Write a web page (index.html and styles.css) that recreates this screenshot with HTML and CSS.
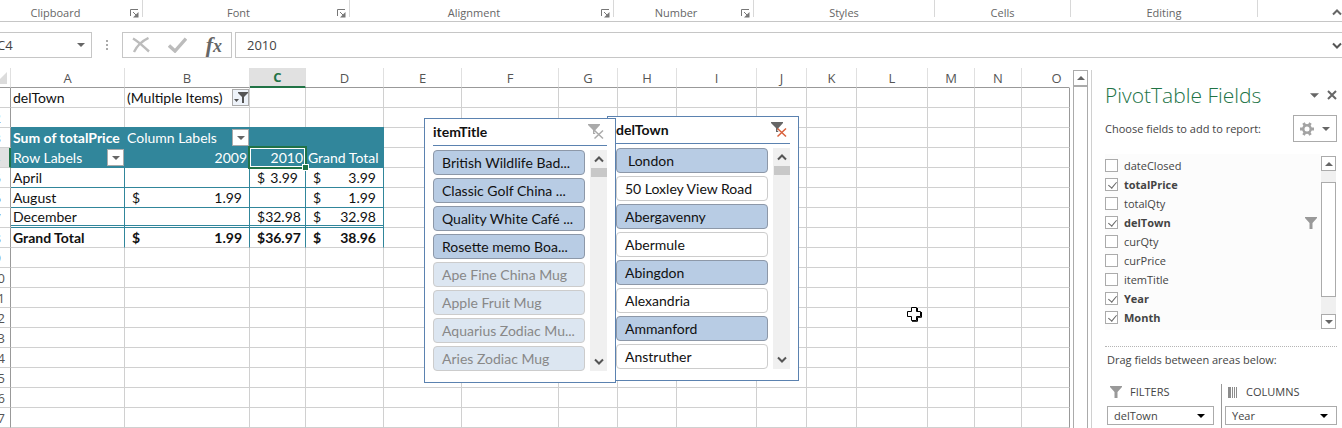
FILE: index.html
```html
<!DOCTYPE html>
<html lang="en">
<head>
<meta charset="utf-8">
<title>PivotTable workbook</title>
<link rel="stylesheet" href="styles.css">
</head>
<body>
<svg class="defs" aria-hidden="true">
  <symbol id="launch" viewBox="0 0 9 9"><path d="M.5 7V.5H8M3 3l3 3" fill="none" stroke="#777"/><path d="M8.500 3v5.500H3z" fill="#777"/></symbol>
  <symbol id="down" viewBox="0 0 8 4"><path d="M0 0h8L4 4z" fill="currentColor"/></symbol>
  <symbol id="up" viewBox="0 0 8 4"><path d="M0 4h8L4 0z" fill="currentColor"/></symbol>
  <symbol id="funnel" viewBox="0 0 12 12"><path d="M0 0h12v1L7.500 6v6h-3V6L0 1z" fill="currentColor"/></symbol>
  <symbol id="chev-up" viewBox="0 0 10 7"><path d="M1 5.500L5 1.500l4 4" fill="none" stroke="currentColor" stroke-width="2"/></symbol>
  <symbol id="chev-down" viewBox="0 0 10 7"><path d="M1 1.500l4 4 4-4" fill="none" stroke="currentColor" stroke-width="2"/></symbol>
  <symbol id="clear" viewBox="0 0 16 16"><path d="M0 0h12v1L7.500 6v4H5V6L0 1z" fill="currentColor" stroke="none"/><path d="M7 7l8 7M15 7l-8 7" fill="none" stroke="#fff" stroke-width="3"/><path d="M6.500 6.500l8.500 8M15 6.500l-8.500 8" fill="none" stroke-width="1.500"/></symbol>
</svg>

<header class="ribbon">
  <div class="group group-clip"><span>Clipboard</span><button class="launcher" aria-label="Clipboard settings"><svg><use href="#launch"/></svg></button></div>
  <div class="group group-font"><span>Font</span><button class="launcher" aria-label="Font settings"><svg><use href="#launch"/></svg></button></div>
  <div class="group group-align"><span>Alignment</span><button class="launcher" aria-label="Alignment settings"><svg><use href="#launch"/></svg></button></div>
  <div class="group group-number"><span>Number</span><button class="launcher" aria-label="Number settings"><svg><use href="#launch"/></svg></button></div>
  <div class="group group-styles"><span>Styles</span></div>
  <div class="group group-cells"><span>Cells</span></div>
  <div class="group group-edit"><span>Editing</span></div>
  <button class="collapse" aria-label="Collapse ribbon"><svg viewBox="0 0 10 7"><use href="#chev-up"/></svg></button>
</header>

<div class="formula-bar">
  <div class="name-box"><input aria-label="Name box" value="C4"><button aria-label="Names"><svg class="arrow"><use href="#down"/></svg></button></div>
  <div class="dots"><i></i><i></i><i></i></div>
  <div class="tools">
    <button aria-label="Cancel"><svg width="18" height="16" viewBox="0 0 18 16"><path d="M1 1.500C7 5 12 10 17 14.500M16.500 1C10 4 5 9 2 15" fill="none" stroke="#bcbcbc" stroke-width="2.400"/></svg></button>
    <button aria-label="Enter"><svg width="19" height="16" viewBox="0 0 19 16"><path d="M1 8.500l6 5.500L18 1.500" fill="none" stroke="#bcbcbc" stroke-width="3.400"/></svg></button>
    <button class="fx" aria-label="Insert function"><b>f</b><b class="fx-x">x</b></button>
  </div>
  <div class="formula"><input aria-label="Formula" value="2010"><button aria-label="Expand formula bar"><svg class="chev"><use href="#chev-down"/></svg></button></div>
</div>

<main class="work">
  <section class="sheet">
    <table class="grid">
      <colgroup><col class="c-head"><col class="c-a"><col class="c-b"><col class="c-c"><col class="c-d"><col class="c-e"><col class="c-f"><col class="c-g"><col class="c-h"><col class="c-i"><col class="c-j"><col class="c-k"><col class="c-l"><col class="c-m"><col class="c-n"><col></colgroup>
      <thead>
        <tr><th class="corner"><svg width="7" height="12" viewBox="0 0 7 12"><path d="M7 0v12H0V7z" fill="#dcdcdc"/></svg></th><th>A</th><th>B</th><th class="active">C</th><th>D</th><th>E</th><th>F</th><th>G</th><th>H</th><th>I</th><th>J</th><th>K</th><th>L</th><th>M</th><th>N</th><th class="col-o">O</th></tr>
      </thead>
      <tbody>
        <tr><th><span>1</span></th><td>delTown</td><td><div class="with-btn"><span>(Multiple Items)</span><button class="drop filtered" aria-label="Filter delTown"><svg width="14" height="12" viewBox="0 0 14 12"><path d="M4 0h10v1l-4 4v6H8V5L4 1zM0 7h5L2.500 10z" fill="#555"/></svg></button></div></td><td><td><td><td><td><td><td><td><td><td><td><td><td></tr>
        <tr><th><span>2</span></th><td><td><td><td><td><td><td><td><td><td><td><td><td><td><td></tr>
        <tr class="pivot-head"><th><span>3</span></th><td><b>Sum of totalPrice</b></td><td><div class="with-btn"><span>Column Labels</span><button class="drop" aria-label="Column labels menu"><svg class="arrow"><use href="#down"/></svg></button></div></td><td><td><td><td><td><td><td><td><td><td><td><td><td></tr>
        <tr class="pivot-head"><th class="active-row"><span>4</span></th><td><div class="with-btn"><span>Row Labels</span><button class="drop" aria-label="Row labels menu"><svg class="arrow"><use href="#down"/></svg></button></div></td><td class="num">2009</td><td class="num selected">2010</td><td>Grand Total</td><td><td><td><td><td><td><td><td><td><td><td></tr>
        <tr class="pivot"><th><span>5</span></th><td>April</td><td></td><td><div class="money"><span>$</span><span>3.99</span></div></td><td><div class="money"><span>$</span><span>3.99</span></div></td><td><td><td><td><td><td><td><td><td><td><td></tr>
        <tr class="pivot"><th><span>6</span></th><td>August</td><td><div class="money"><span>$</span><span>1.99</span></div></td><td></td><td><div class="money"><span>$</span><span>1.99</span></div></td><td><td><td><td><td><td><td><td><td><td><td></tr>
        <tr class="pivot pivot-last"><th><span>7</span></th><td>December</td><td></td><td><div class="money"><span>$</span><span>32.98</span></div></td><td><div class="money"><span>$</span><span>32.98</span></div></td><td><td><td><td><td><td><td><td><td><td><td></tr>
        <tr class="pivot pivot-total"><th><span>8</span></th><td>Grand Total</td><td><div class="money"><span>$</span><span>1.99</span></div></td><td><div class="money"><span>$</span><span>36.97</span></div></td><td><div class="money"><span>$</span><span>38.96</span></div></td><td><td><td><td><td><td><td><td><td><td><td></tr>
        <tr><th><span>9</span></th><td><td><td><td><td><td><td><td><td><td><td><td><td><td><td></tr>
        <tr class="wide"><th><span>10</span></th><td><td><td><td><td><td><td><td><td><td><td><td><td><td><td></tr>
        <tr class="wide"><th><span>11</span></th><td><td><td><td><td><td><td><td><td><td><td><td><td><td><td></tr>
        <tr class="wide"><th><span>12</span></th><td><td><td><td><td><td><td><td><td><td><td><td><td><td><td></tr>
        <tr class="wide"><th><span>13</span></th><td><td><td><td><td><td><td><td><td><td><td><td><td><td><td></tr>
        <tr class="wide"><th><span>14</span></th><td><td><td><td><td><td><td><td><td><td><td><td><td><td><td></tr>
        <tr class="wide"><th><span>15</span></th><td><td><td><td><td><td><td><td><td><td><td><td><td><td><td></tr>
        <tr class="wide"><th><span>16</span></th><td><td><td><td><td><td><td><td><td><td><td><td><td><td><td></tr>
        <tr class="wide"><th><span>17</span></th><td><td><td><td><td><td><td><td><td><td><td><td><td><td><td></tr>
      </tbody>
    </table>

    <section class="slicer slicer-town">
      <header><h2>delTown</h2><button class="clear on" aria-label="Clear delTown filter"><svg><use href="#clear"/></svg></button></header>
      <div class="slicer-body">
        <div class="items">
          <button class="on lead">London</button><button>50 Loxley View Road</button><button class="on">Abergavenny</button><button>Abermule</button><button class="on">Abingdon</button><button>Alexandria</button><button class="on">Ammanford</button><button>Anstruther</button>
        </div>
        <div class="track"><svg class="chev"><use href="#chev-up"/></svg><i></i><svg class="chev end"><use href="#chev-down"/></svg></div>
      </div>
    </section>
    <section class="slicer slicer-item">
      <header><h2>itemTitle</h2><button class="clear" aria-label="Clear itemTitle filter"><svg><use href="#clear"/></svg></button></header>
      <div class="slicer-body">
        <div class="items">
          <button class="on">British Wildlife Bad...</button><button class="on">Classic Golf China ...</button><button class="on">Quality White Café ...</button><button class="on">Rosette memo Boa...</button><button class="dim">Ape Fine China Mug</button><button class="dim">Apple Fruit Mug</button><button class="dim">Aquarius Zodiac Mu...</button><button class="dim">Aries Zodiac Mug</button>
        </div>
        <div class="track"><svg class="chev"><use href="#chev-up"/></svg><i></i><svg class="chev end"><use href="#chev-down"/></svg></div>
      </div>
    </section>
    <svg class="cursor" viewBox="0 0 16 16"><path d="M5.500 1.500h5v4h4v5h-4v4h-5v-4h-4v-5h4z" fill="#fff" stroke="#000"/><path d="M11.500 5v-3M6 15.300h5.500v-4h4V6" fill="none" stroke="#000"/></svg>
  </section>

  <div class="vscroll"><button aria-label="Scroll up"><svg class="arrow"><use href="#up"/></svg></button><div class="thumb"></div></div>

  <aside class="pane">
    <div class="pane-title"><h1>PivotTable Fields</h1><button aria-label="Pane options"><svg class="arrow wide-arrow"><use href="#down"/></svg></button><button aria-label="Close pane"><svg width="10" height="10" viewBox="0 0 10 10"><path d="M1 1l8 8M9 1L1 9" stroke="#666" stroke-width="2"/></svg></button></div>
    <div class="choose"><p>Choose fields to add to report:</p><button class="gear" aria-label="Tools"><svg width="14" height="14" viewBox="0 0 14 14"><circle cx="7" cy="7" r="3.700" fill="none" stroke="#a3a3a3" stroke-width="2.400"/><path d="M3.500 1l1.500 2.500M10.500 1L9 3.500M0 7h3M11 7h3M3.500 13L5 10.500M10.500 13L9 10.500" stroke="#a3a3a3" stroke-width="2.800"/></svg><svg class="arrow"><use href="#down"/></svg></button></div>
    <div class="fields">
      <div class="field-list">
        <label><input type="checkbox"><span>dateClosed</span></label>
        <label><input type="checkbox" checked><span>totalPrice</span></label>
        <label><input type="checkbox"><span>totalQty</span></label>
        <label><input type="checkbox" checked><span>delTown</span><svg class="funnel"><use href="#funnel"/></svg></label>
        <label><input type="checkbox"><span>curQty</span></label>
        <label><input type="checkbox"><span>curPrice</span></label>
        <label><input type="checkbox"><span>itemTitle</span></label>
        <label><input type="checkbox" checked><span>Year</span></label>
        <label><input type="checkbox" checked><span>Month</span></label>
      </div>
      <div class="list-scroll"><button aria-label="Scroll fields up"><svg class="arrow"><use href="#up"/></svg></button><div class="thumb"></div><button aria-label="Scroll fields down"><svg class="arrow"><use href="#down"/></svg></button></div>
    </div>
    <div class="areas">
      <p>Drag fields between areas below:</p>
      <div class="area-row">
        <div class="area"><h3><svg class="funnel"><use href="#funnel"/></svg>FILTERS</h3><button>delTown<svg class="arrow"><use href="#down"/></svg></button></div>
        <div class="area"><h3><svg width="10" height="11" viewBox="0 0 10 11"><path d="M0 0h3v11H0zM4 0h1v11H4zM6 0h1v11H6zM8 0h1v11H8z" fill="#8c8c8c"/></svg>COLUMNS</h3><button>Year<svg class="arrow"><use href="#down"/></svg></button></div>
      </div>
    </div>
  </aside>
</main>
</body>
</html>
```
FILE: styles.css
```css
* { box-sizing: border-box; }
body { margin: 0; min-height: 100vh; display: flex; flex-direction: column; background: #fff; color: #444; font: 12px/16px "Open Sans", sans-serif; overflow: hidden; }
button, input { font: inherit; color: inherit; margin: 0; padding: 0; border: 0; background: none; outline: 0; }
button { display: flex; align-items: center; justify-content: center; }
h1, h2, h3, p { margin: 0; font-weight: normal; }
svg { display: block; flex: none; }
.defs { position: absolute; width: 0; height: 0; }
.arrow { width: 8px; height: 4px; color: #666; }
.chev { width: 10px; height: 7px; color: #555; }
.funnel { width: 12px; height: 12px; color: #999; }

/* Ribbon labels */
.ribbon { display: flex; height: 22px; border-bottom: 1px solid #c6c6c6; font-size: 11px; color: #666; }
.group { display: flex; justify-content: center; height: 17px; padding-top: 5px; border-right: 1px solid #d8d8d8; flex: none; }
.group span { flex: 1; text-align: center; }
.launcher { width: 15px; height: 17px; padding-right: 3px; justify-content: flex-end; }
.launcher svg { width: 9px; height: 9px; }
.group-clip { width: 159px; margin-left: -16px; }
.group-font { width: 207px; }
.group-align { width: 264px; }
.group-number { width: 140px; }
.group-styles { width: 181px; }
.group-cells { width: 136px; }
.group-edit { width: 187px; }
.collapse { margin-left: auto; align-self: flex-end; height: 17px; }
.collapse svg { width: 10px; height: 7px; color: #666; }

/* Formula bar */
.formula-bar { display: flex; height: 46px; padding: 10px 0; font-size: 13px; }
.name-box { display: flex; width: 97px; margin-left: -5px; border: 1px solid #c6c6c6; }
.name-box input { flex: 1; min-width: 0; padding-left: 1px; }
.name-box button { width: 20px; }
.dots { width: 30px; display: flex; flex-direction: column; align-items: center; justify-content: center; gap: 2px; }
.dots i { width: 2px; height: 2px; background: #aaa; }
.tools { display: flex; align-items: center; justify-content: space-between; width: 110px; padding: 0 9px; border: 1px solid #c6c6c6; }
.fx { font: italic 22px/22px "Liberation Serif", serif; color: #666; align-items: baseline; }
.fx-x { font-size: 18px; }
.formula { display: flex; flex: 1; margin-left: 3px; border: 1px solid #c6c6c6; border-right: 0; }
.formula input { flex: 1; padding-left: 11px; }

/* Worksheet */
.work { display: flex; flex: 1; }
.sheet { position: relative; flex: 1; min-width: 0; overflow: hidden; }
.grid { width: 100%; table-layout: fixed; border-collapse: separate; border-spacing: 0; font: 14px/19px Lato, sans-serif; color: #111; }
.c-head { width: 11px; } .c-a { width: 114px; } .c-b { width: 125px; } .c-c { width: 56px; }
.c-d, .c-e { width: 78px; } .c-f { width: 97px; } .c-g, .c-h { width: 59px; } .c-i { width: 80px; }
.c-j, .c-k { width: 50px; } .c-l { width: 71px; } .c-m, .c-n { width: 47px; }
.grid th, .grid td { height: 20px; padding: 0; border-right: 1px solid #d0d0d0; border-bottom: 1px solid #d0d0d0; white-space: nowrap; overflow: hidden; }
.grid td { padding-left: 2px; text-align: left; }
.grid tr > :last-child { border-right-color: #999; }
.grid th { font: 13px/18px "Open Sans", sans-serif; color: #555; }
.grid thead th { border-color: #e0e0e0; border-bottom-color: #999; }
.grid thead .col-o { padding-left: 22px; border-right-color: transparent; }
.grid thead .active { background: #e1e1e1; border-bottom: 2px solid #217346; color: #217346; font-weight: bold; }
.grid tbody th { border-right-color: #999; }
.grid tbody th span { display: flex; justify-content: flex-end; padding-right: 9px; }
.grid tbody .wide span { padding-right: 5px; }
.grid .active-row { background: #e1e1e1; border-right: 2px solid #217346; color: #217346; }
.with-btn { display: flex; justify-content: space-between; height: 19px; }
.drop { width: 17px; height: 17px; margin-top: 1px; border: 1px solid #ababab; background: #fff; }
.filtered { background: #eef3fa; }
.grid .num { text-align: right; padding-right: 2px; }
.pivot-head td:nth-child(-n+5) { background: #31869b; border-color: #31869b; color: #fff; box-shadow: 0 -1px #31869b; }
.pivot td:nth-child(-n+5) { border-color: #31869b; }
.pivot-last td:nth-child(-n+5) { border-bottom-style: double; border-bottom-width: 3px; line-height: 17px; }
.pivot-total { font-weight: bold; }
.pivot-total td:nth-child(-n+5) { border-bottom-color: #d0d0d0; }
.money { display: flex; justify-content: space-between; padding: 0 7px 0 5px; }
.grid .pivot-head .selected { overflow: visible; position: relative; }
.selected::before { content: ""; position: absolute; inset: -2px; border: 2px solid #217346; box-shadow: inset 0 0 0 1px #fff; }
.selected::after { content: ""; position: absolute; right: -3px; bottom: -3px; width: 5px; height: 5px; background: #217346; outline: 1px solid #fff; }

/* Slicers */
.slicer { position: absolute; width: 192px; padding: 0 8px 11px; background: #fff; border: 1px solid #5b82b0; font: 14px/20px Lato, sans-serif; color: #111; }
.slicer-item { left: 424px; top: 50px; }
.slicer-town { left: 607px; top: 48px; }
.slicer header { display: flex; justify-content: space-between; height: 27px; border-bottom: 1px solid #5b82b0; }
.slicer h2 { font-size: 14px; line-height: 26px; font-weight: bold; }
.clear { padding-right: 3px; color: #aaa; }
.clear svg { width: 16px; height: 16px; stroke: #aaa; }
.clear.on { color: #666; }
.clear.on svg { stroke: #d9603b; }
.slicer-body { display: flex; justify-content: space-between; padding-top: 4px; }
.items { display: flex; flex-direction: column; gap: 3px; width: 152px; }
.items button { height: 25px; padding-left: 8px; justify-content: flex-start; white-space: nowrap; border: 1px solid #ccc; border-radius: 4px; background: #fff; }
.items .on { background: #b8cce4; border-color: #8d98a8; }
.items .dim { background: #dce6f1; color: #888; }
.items .lead { padding-left: 11px; }
.track { display: flex; flex-direction: column; align-items: center; width: 17px; padding: 6px 0; background: #f0f0f0; }
.track i { width: 16px; height: 9px; margin-top: 5px; background: #c8c8c8; }
.track .end { margin-top: auto; }
.cursor { position: absolute; left: 906px; top: 238px; width: 16px; height: 16px; }

.vscroll { display: flex; flex-direction: column; width: 15px; margin: 2px 3px 0; }
.vscroll button { height: 16px; border: 1px solid #ababab; }
.vscroll .thumb { flex: 1; border: 1px solid #ababab; border-bottom: 0; }

/* Field pane */
.pane { width: 251px; margin-top: 2px; padding: 10px 5px 0 13px; border-left: 1px solid #d0d0d0; }
.pane-title { display: flex; align-items: center; gap: 8px; height: 30px; }
.pane-title h1 { flex: 1; font-size: 21px; line-height: 30px; font-weight: 300; color: #217346; white-space: nowrap; }
.wide-arrow { width: 9px; height: 5px; }
.choose { display: flex; align-items: center; justify-content: space-between; height: 37px; }
.choose p { white-space: nowrap; font-size: 11px; }
.gear { width: 44px; height: 27px; gap: 8px; border: 1px solid #ababab; }
.fields { display: flex; margin-top: 7px; padding-right: 1px; }
.field-list { flex: 1; height: 176px; background: #fcfcfc; padding-top: 2px; font-size: 11px; }
.field-list label { display: flex; align-items: center; height: 19px; gap: 6px; }
.field-list span { flex: 1; }
.field-list .funnel { margin-right: 4px; }
.field-list input { appearance: none; position: relative; width: 13px; height: 13px; border: 1px solid #ababab; background: #fff; }
.field-list input:checked::after { content: ""; position: absolute; left: 4px; top: 1px; width: 4px; height: 7px; border: solid #666; border-width: 0 1px 1px 0; transform: rotate(40deg); }
.field-list input:checked + span { font-weight: bold; }
.list-scroll { display: flex; flex-direction: column; width: 15px; height: 173px; margin-top: 2px; background: #f0f0f0; }
.list-scroll button { height: 15px; border: 1px solid #ababab; background: #fff; }
.list-scroll .thumb { height: 115px; margin: 11px 0 auto; border: 1px solid #ababab; background: #fff; }
.areas { margin-top: 16px; padding: 5px 0 0 2px; border-top: 1px dotted #b5b5b5; }
.areas p { font-size: 11px; }
.area-row { display: grid; grid-template-columns: 114px 1fr; margin-top: 16px; }
.area { padding-right: 7px; }
.area + .area { border-left: 1px solid #999; padding: 0 0 24px 3px; }
.area h3 { display: flex; align-items: center; gap: 8px; height: 16px; padding-left: 3px; font-size: 11px; }
.area button { width: 100%; height: 19px; margin-top: 6px; padding: 0 8px 0 6px; justify-content: space-between; border: 1px solid #ababab; font-size: 11px; }
.area button .arrow { color: #000; }
```
